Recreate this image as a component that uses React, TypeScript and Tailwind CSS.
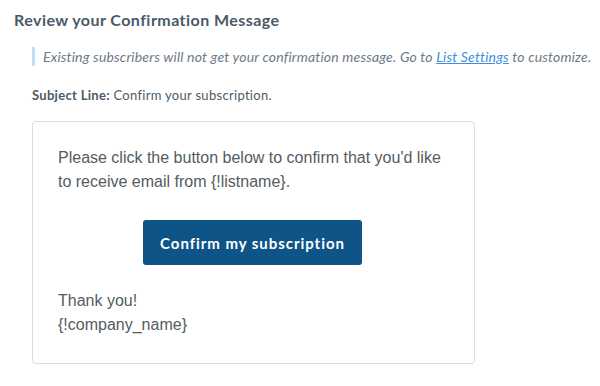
export default function App() {
  return (
    <div className="min-h-screen bg-white font-['Lato',sans-serif] text-[#4b5b69]">
      <div className="px-[14px] pt-[9px]">
        <h2 className="text-[16px] font-bold leading-[22px] tracking-[0.45px] text-[#4a5968]">
          Review your Confirmation Message
        </h2>

        <div className="mt-[16px] ml-[18px] border-l-[3px] border-[#bfe0f7] pl-[8px] text-[14px] italic leading-[19px] tracking-[0.18px] text-[#6c7a88] whitespace-nowrap">
          Existing subscribers will not get your confirmation message. Go to{" "}
          <a href="#" className="text-[#3d8ee0] underline">
            List Settings
          </a>{" "}
          to customize.
        </div>

        <p className="mt-[20px] ml-[18px] text-[13px] leading-[18px] tracking-[0.3px] text-[#4b5b69]">
          <span className="font-bold">Subject Line:</span> Confirm your subscription.
        </p>

        <div className="mt-[17px] ml-[18px] w-[443px] rounded-[4px] border border-[#d6dde4] bg-white px-[25px] pt-[24px] pb-[26px] font-['Liberation_Sans',Arial,sans-serif] text-[16px] leading-[24px] text-[#555b61]">
          <p>
            Please click the button below to confirm that you'd like
            <br />
            to receive email from {"{!listname}"}.
          </p>
          <div className="mt-[26px] flex pl-[85px]">
            <button className="h-[45px] w-[219px] rounded-[3px] bg-[#0e5487] font-['Lato',sans-serif] text-[15px] font-bold tracking-[0.95px] text-white">
              Confirm my subscription
            </button>
          </div>
          <p className="mt-[24px]">
            Thank you!
            <br />
            {"{!company_name}"}
          </p>
        </div>
      </div>
    </div>
  );
}
